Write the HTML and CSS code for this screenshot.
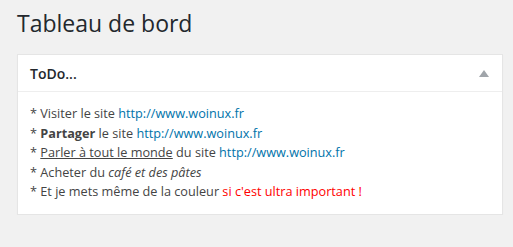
FILE: index.html
```html
<!DOCTYPE html>
<html lang="fr">
<head>
    <meta charset="UTF-8">
    <title>Tableau de bord</title>
    <link rel="stylesheet" href="styles.css">
</head>
<body>
    <div class="wrap">
        <h1>Tableau de bord</h1>

        <div class="postbox">
            <div class="postbox-header">
                <h2>ToDo...</h2>
                <span class="toggle-arrow"></span>
            </div>
            <div class="inside">
                <p>* Visiter le site <a href="#">http://www.woinux.fr</a></p>
                <p>* <strong>Partager</strong> le site <a href="#">http://www.woinux.fr</a></p>
                <p>* <u>Parler à tout le monde</u> du site <a href="#">http://www.woinux.fr</a></p>
                <p>* Acheter du <em>café et des pâtes</em></p>
                <p>* Et je mets même de la couleur <span class="red">si c'est ultra important !</span></p>
            </div>
        </div>
    </div>
</body>
</html>
```

FILE: styles.css
```css
body {
    margin: 0;
    background: #f1f1f1;
    font-family: 'Open Sans', sans-serif;
    color: #444;
    font-size: 12.7px;
}

.wrap {
    padding: 0 10px 0 17px;
}

h1 {
    font-size: 23px;
    font-weight: 400;
    line-height: 29px;
    color: #23282d;
    margin: 0;
    padding: 9px 0 16px;
}

.postbox {
    background: #fff;
    border: 1px solid #e5e5e5;
    box-shadow: 0 1px 1px rgba(0, 0, 0, 0.04);
}

.postbox-header {
    display: flex;
    align-items: center;
    justify-content: space-between;
    height: 36px;
    padding: 0 12px;
    border-bottom: 1px solid #eee;
}

.postbox-header h2 {
    margin: 0;
    font-size: 14px;
    font-weight: 600;
    color: #23282d;
}

.toggle-arrow {
    width: 0;
    height: 0;
    border-left: 5px solid transparent;
    border-right: 5px solid transparent;
    border-bottom: 7px solid #a0a5aa;
    margin-right: 1px;
}

.inside {
    padding: 12px 12px 12px;
}

.inside p {
    margin: 0;
    line-height: 19.6px;
}

.inside a {
    color: #0073aa;
    text-decoration: none;
}

.red {
    color: #ff0000;
}
```
